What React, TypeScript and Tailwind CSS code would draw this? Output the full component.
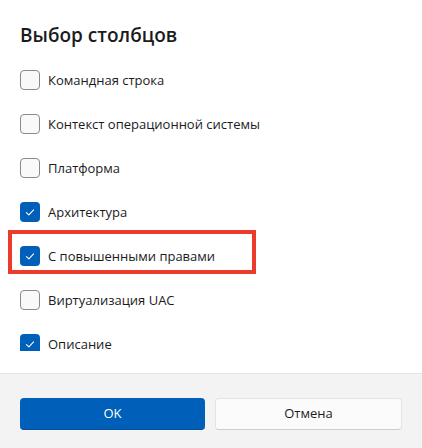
import React from "react";

const items: { label: string; checked: boolean }[] = [
  { label: "Командная строка", checked: false },
  { label: "Контекст операционной системы", checked: false },
  { label: "Платформа", checked: false },
  { label: "Архитектура", checked: true },
  { label: "С повышенными правами", checked: true },
  { label: "Виртуализация UAC", checked: false },
  { label: "Описание", checked: true },
];

function Box({ checked }: { checked: boolean }) {
  if (checked) {
    return (
      <div className="w-5 h-5 rounded-[4px] bg-[#005fb8] flex items-center justify-center shrink-0">
        <svg width="12" height="12" viewBox="0 0 12 12" fill="none">
          <path d="M2.4 6.6 L4.9 8.9 L9.6 3.9" stroke="white" strokeWidth="1.1" strokeLinecap="round" strokeLinejoin="round" />
        </svg>
      </div>
    );
  }
  return <div className="w-5 h-5 rounded-[4px] border border-[#8a8a8a] bg-[#f9f9f9] shrink-0" />;
}

export default function App() {
  return (
    <div
      className="w-[422px] h-[448px] flex flex-col bg-white text-[#1b1b1b] relative overflow-hidden"
      style={{ fontFamily: '"Open Sans", "Noto Sans", sans-serif' }}
    >
      <div className="h-[373px] bg-white flex flex-col">
        <div className="h-[58px] px-5 pt-[22px]">
          <h1 className="text-[19px] font-semibold leading-[26px]">Выбор столбцов</h1>
        </div>
        <div className="h-[293px] overflow-hidden flex flex-col">
          {items.map((it) => (
            <div key={it.label} className="h-[44px] shrink-0 flex items-center gap-2 px-5">
              <Box checked={it.checked} />
              <span className="text-[13px] leading-none">{it.label}</span>
            </div>
          ))}
        </div>
      </div>
      <div className="flex-1 bg-[#f3f3f3] border-t border-[#e5e5e5] px-5 pt-[24px] flex gap-[10px]">
        <button className="flex-1 h-8 rounded-[4px] bg-[#005fb8] text-white text-[13px] border-b border-[#0a4f9a]">
          OK
        </button>
        <button className="flex-1 h-8 rounded-[4px] bg-[#fbfbfb] text-[#1b1b1b] text-[13px] border border-[#e3e3e3] border-b-[#cdcdcd]">
          Отмена
        </button>
      </div>
      <div className="absolute left-[8px] top-[230px] w-[248px] h-[44px] border-4 border-[#ec3b2b] pointer-events-none" />
    </div>
  );
}
